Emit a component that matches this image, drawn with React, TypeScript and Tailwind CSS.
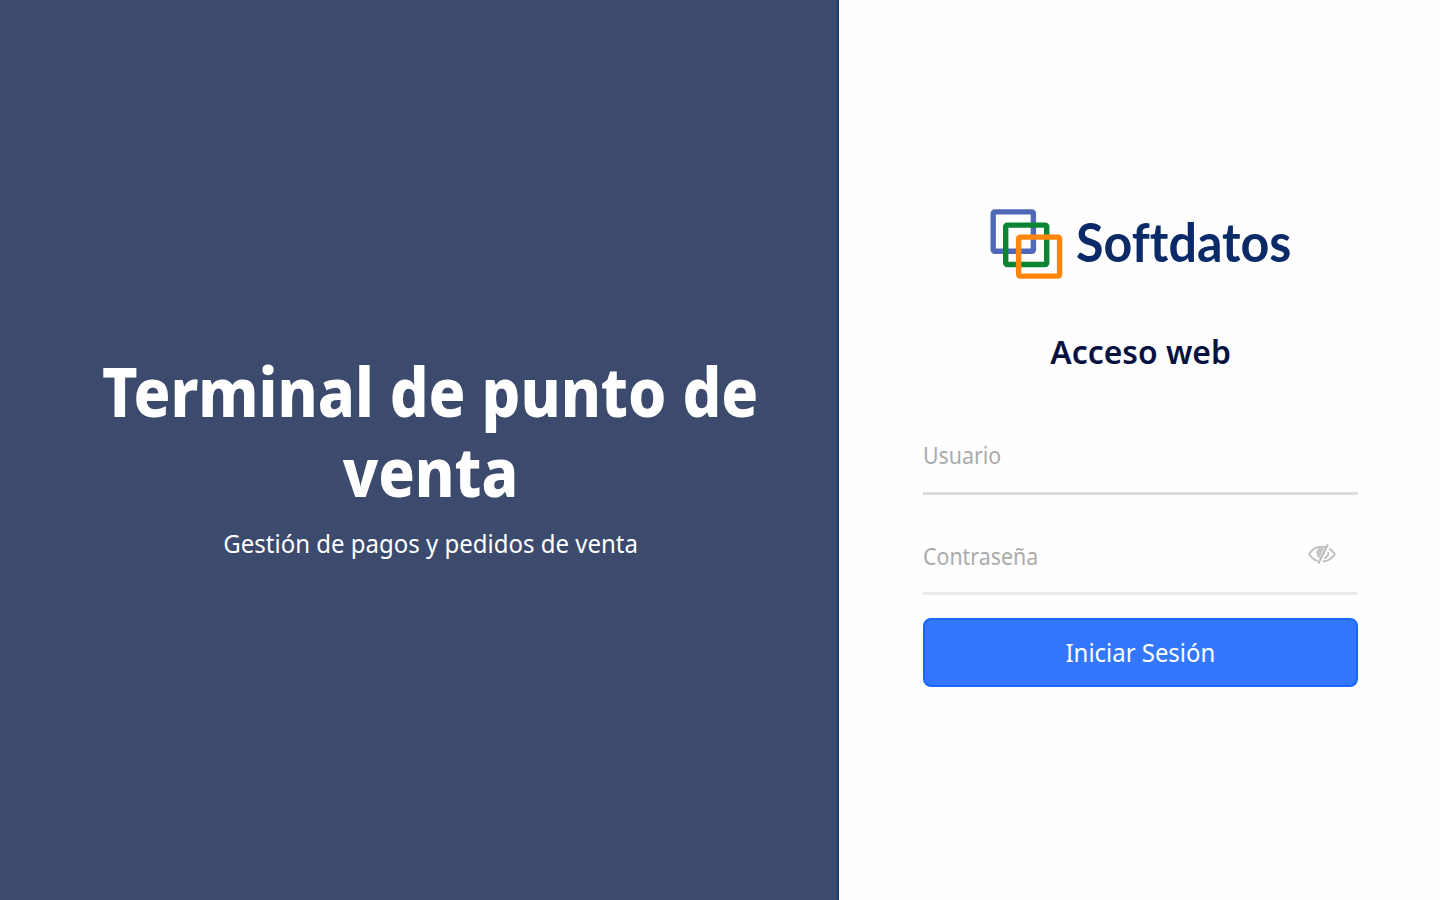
import type { ReactNode } from "react";

type FieldProps = {
  label: string;
  className: string;
  children?: ReactNode;
};

function LogoMark() {
  return (
    <svg className="shrink-0" width="74" height="72" viewBox="0 0 74 72" fill="none" strokeWidth="5.4" aria-hidden>
      <rect x="3.2" y="3.9" width="40.2" height="39.4" rx="1.5" stroke="#5068b8" />
      <rect x="15.7" y="17.1" width="41" height="39.4" rx="1.5" stroke="#0b8534" />
      <rect x="28.6" y="29.1" width="41" height="39" rx="1.5" stroke="#ff850d" />
    </svg>
  );
}

function EyeSlashIcon() {
  return (
    <svg className="mt-[3px] shrink-0" width="28" height="22" viewBox="0 0 28 22" fill="none" stroke="#bdbdbd" aria-hidden>
      <path d="M9.6 18C6 16.8 3 14.2 1.2 11C4 6.2 8.5 3.6 14 3.6C15.2 3.6 16.3 3.8 17.3 4" strokeWidth="1.8" />
      <path d="M21 5.5C23.4 6.8 25.4 8.7 26.8 11C24.2 15.4 19.7 18.2 14.6 18.4" strokeWidth="1.8" />
      <path d="M19.8 1.5L10.2 20.5" strokeWidth="2.2" />
      <path d="M10.5 15C7.4 11.8 8 7.2 11 5L16.4 4.4L11.5 14.5Z" fill="#c6c6c6" stroke="none" />
      <path d="M20.3 9.3C20.5 12 18.8 14.4 16.2 15.3" strokeWidth="1.8" />
    </svg>
  );
}

function Field({ label, className, children }: FieldProps) {
  return (
    <div className={`flex items-start justify-between pr-[22px] ${className}`}>
      <span className="origin-left scale-x-[0.89] whitespace-nowrap text-[24px] leading-8 text-[#ababab]">
        {label}
      </span>
      {children}
    </div>
  );
}

export default function App() {
  return (
    <div className="flex h-[900px] w-[1440px] overflow-hidden bg-[#fefefe] font-['Noto_Sans',sans-serif]">
      <section className="flex w-[839px] shrink-0 flex-col items-center border-r-2 border-[#203c70] bg-[#3b4a6d] pl-[24px] pt-[351px] text-center text-white">
        <h1 className="flex flex-col items-center whitespace-nowrap text-[67px] font-extrabold leading-[80px]">
          <span className="scale-x-[0.911]">Terminal de punto de</span>
          <span className="scale-x-[0.9]">venta</span>
        </h1>
        <p className="mt-4 scale-x-[0.923] whitespace-nowrap text-[26px] leading-8">
          Gestión de pagos y pedidos de venta
        </p>
      </section>

      <main className="flex flex-1 flex-col items-center pl-[2px] pt-[208px]">
        <div className="flex h-[72px] w-[302px] items-start">
          <LogoMark />
          <span className="ml-[12px] mt-1 origin-left scale-x-[0.93] whitespace-nowrap font-['Lato',sans-serif] text-[54px] font-bold leading-[60px] text-[#0a2a68] [font-variant-ligatures:none]">
            Softdatos
          </span>
        </div>

        <h2 className="mt-[52px] scale-x-[0.965] whitespace-nowrap text-[33px] font-semibold leading-10 text-[#06113f]">
          Acceso web
        </h2>

        <form className="mt-[50px] flex w-[435px] flex-col">
          <Field label="Usuario" className="h-[73px] border-b-[3px] border-[#dcdcdc] pt-[17px]" />
          <Field label="Contraseña" className="h-[100px] border-b-[3px] border-[#ebebeb] pt-[45px]">
            <EyeSlashIcon />
          </Field>
          <button
            type="button"
            className="mt-[23px] flex h-[69px] items-center justify-center rounded-lg border-2 border-[#1668ff] bg-[#3377ff] text-[26px] text-white"
          >
            <span className="scale-x-[0.92]">Iniciar Sesión</span>
          </button>
        </form>
      </main>
    </div>
  );
}
